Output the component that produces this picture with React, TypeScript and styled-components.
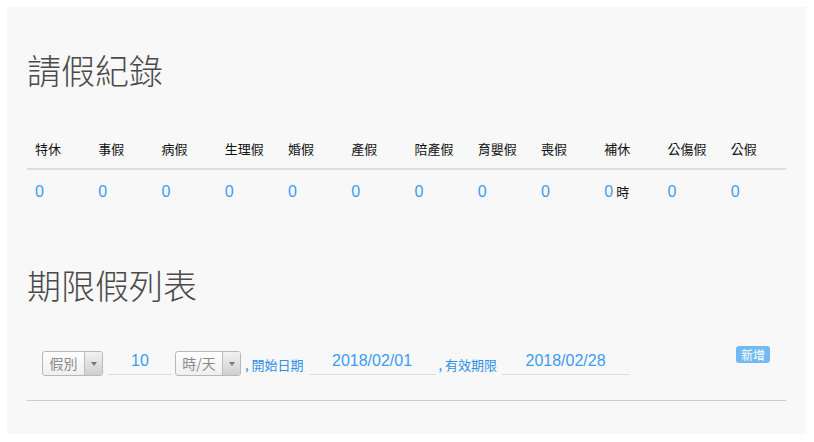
import { createGlobalStyle } from "styled-components";
import styled from "styled-components";

const GlobalStyle = createGlobalStyle`
  body {
    margin: 0;
    background: #ffffff;
    font-family: "Liberation Sans", "Noto Sans CJK TC", sans-serif;
  }
`;

const Panel = styled.div`
  margin: 7px 8px 0 7px;
  background: #f8f8f8;
  padding: 42px 20px 33px 20px;
`;

const Title = styled.h2<{ $top?: number }>`
  margin: ${(p) => p.$top ?? 0}px 0 0 0;
  font-family: "Noto Sans CJK TC", sans-serif;
  font-size: 34px;
  font-weight: 300;
  line-height: 41px;
  color: #4a4a4a;
`;

const Table = styled.table`
  margin-top: 39px;
  width: 100%;
  border-collapse: collapse;
  table-layout: fixed;
`;

const Th = styled.th`
  text-align: left;
  padding: 8px;
  font-family: "Noto Sans CJK TC", sans-serif;
  font-size: 13px;
  font-weight: 400;
  line-height: 23px;
  color: #111;
  border-bottom: 2px solid #dddddd;
  white-space: nowrap;
`;

const Td = styled.td`
  padding: 8px;
  font-size: 16px;
  line-height: 28px;
  color: #3d9cf0;
  white-space: nowrap;
`;

const Unit = styled.span`
  margin-left: 3px;
  font-family: "Noto Sans CJK TC", sans-serif;
  font-size: 13px;
  color: #111;
`;

const FormRow = styled.div`
  margin-top: 41px;
  display: flex;
  align-items: flex-start;
  padding: 0 16px 0 15px;
`;

const Select = styled.div<{ $w: number; $ml?: number }>`
  margin-top: 5px;
  margin-left: ${(p) => p.$ml ?? 0}px;
  width: ${(p) => p.$w}px;
  height: 25px;
  box-sizing: border-box;
  display: flex;
  border: 1px solid #b8b8b8;
  border-radius: 3px;
  background: linear-gradient(#ffffff, #efefef);
  overflow: hidden;
`;

const SelectText = styled.span`
  flex: 1;
  text-align: center;
  font-family: "Noto Sans CJK TC", sans-serif;
  font-size: 14px;
  line-height: 23px;
  color: #8a8a8a;
`;

const Arrow = styled.span`
  width: 17px;
  border-left: 1px solid #bdbdbd;
  background: linear-gradient(#f2f2f2, #cfcfcf);
  display: flex;
  align-items: center;
  justify-content: center;
  &::after {
    content: "";
    border-left: 3px solid transparent;
    border-right: 3px solid transparent;
    border-top: 4px solid #777;
  }
`;

const Field = styled.div<{ $w: number; $ml: number }>`
  margin-left: ${(p) => p.$ml}px;
  width: ${(p) => p.$w}px;
  height: 28px;
  border-bottom: 1px solid #dcdcdc;
  text-align: center;
  font-size: 16px;
  line-height: 30px;
  color: #3d9cf0;
`;

const Label = styled.span<{ $ml: number }>`
  margin-left: ${(p) => p.$ml}px;
  margin-top: 9px;
  font-family: "Noto Sans CJK TC", sans-serif;
  font-size: 13px;
  line-height: 20px;
  color: #2d8fe6;
  white-space: nowrap;
`;

const AddButton = styled.button`
  margin-left: auto;
  height: 17px;
  padding: 0 5px;
  border: none;
  border-radius: 3px;
  background: #72baf3;
  color: #fff;
  font-family: "Noto Sans CJK TC", sans-serif;
  font-size: 12px;
  line-height: 17px;
`;

const Rule = styled.hr`
  margin: 24px 0 0 0;
  border: none;
  border-top: 1px solid #cccccc;
`;

const leaves = ["特休", "事假", "病假", "生理假", "婚假", "產假", "陪產假", "育嬰假", "喪假", "補休", "公傷假", "公假"];

export default function App() {
  return (
    <>
      <GlobalStyle />
      <Panel>
        <Title>請假紀錄</Title>
        <Table>
          <thead>
            <tr>
              {leaves.map((l) => (
                <Th key={l}>{l}</Th>
              ))}
            </tr>
          </thead>
          <tbody>
            <tr>
              {leaves.map((l) => (
                <Td key={l}>
                  0{l === "補休" && <Unit>時</Unit>}
                </Td>
              ))}
            </tr>
          </tbody>
        </Table>
        <Title $top={50}>期限假列表</Title>
        <FormRow>
          <Select $w={61}>
            <SelectText>假別</SelectText>
            <Arrow />
          </Select>
          <Field $w={64} $ml={5}>10</Field>
          <Select $w={66} $ml={3}>
            <SelectText>時/天</SelectText>
            <Arrow />
          </Select>
          <Label $ml={4}>, 開始日期</Label>
          <Field $w={127} $ml={5}>2018/02/01</Field>
          <Label $ml={3}>, 有效期限</Label>
          <Field $w={127} $ml={5}>2018/02/28</Field>
          <AddButton>新增</AddButton>
        </FormRow>
        <Rule />
      </Panel>
    </>
  );
}
